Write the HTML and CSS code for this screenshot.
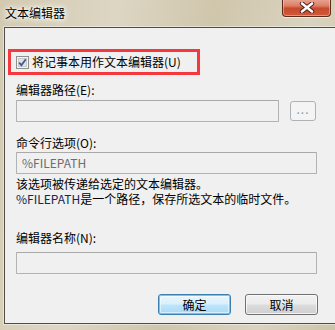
FILE: index.html
```html
<!DOCTYPE html>
<html>
<head>
    <title>文本编辑器</title>
    <link rel="stylesheet" href="styles.css">
</head>
<body>
    <div class="window">
        <div class="titlebar">
            <span class="title">文本编辑器</span>
            <div class="close-btn">
                <svg width="16" height="11" viewBox="0 0 16 11">
                    <path d="M3 1.5 L13 9.5 M13 1.5 L3 9.5" stroke="#4a1a10" stroke-width="4.4" stroke-linecap="round"/>
                    <path d="M3 1.5 L13 9.5 M13 1.5 L3 9.5" stroke="#ffffff" stroke-width="2.6" stroke-linecap="round"/>
                </svg>
            </div>
        </div>

        <div class="client">
            <!-- highlighted option -->
            <div class="highlight">
                <label class="check-row">
                    <span class="checkbox">
                        <svg width="13" height="13" viewBox="0 0 13 13">
                            <rect x="0.5" y="0.5" width="12" height="12" fill="#f4f4f4" stroke="#8e8f8f"/>
                            <rect x="2.5" y="2.5" width="8" height="8" fill="#e2e2e2" stroke="#c9c9c9"/>
                            <path d="M3.2 6.6 L5.4 9.3 L9.8 3.2" fill="none" stroke="#3f5a96" stroke-width="1.8"/>
                        </svg>
                    </span>
                    将记事本用作文本编辑器(U)
                </label>
            </div>

            <p class="label label-path">编辑器路径(E):</p>
            <div class="path-row">
                <div class="field field-path"></div>
                <div class="browse-btn">...</div>
            </div>

            <p class="label label-args">命令行选项(O):</p>
            <div class="field field-wide field-args">%FILEPATH</div>
            <p class="desc">该选项被传递给选定的文本编辑器。<br><span class="var">%FILEPATH</span>是一个路径，保存所选文本的临时文件。</p>

            <p class="label label-name">编辑器名称(N):</p>
            <div class="field field-wide field-name"></div>

            <div class="buttons">
                <div class="btn btn-default">确定</div>
                <div class="btn">取消</div>
            </div>
        </div>
    </div>
</body>
</html>
```

FILE: styles.css
```css
body {
    margin: 0;
    width: 335px;
    height: 330px;
    overflow: hidden;
    font-family: "Noto Sans CJK SC", sans-serif;
    font-size: 12px;
    color: #000;
    background: linear-gradient(100deg, #d2c9b0 0%, #ddd6c3 30%, #cfc6ac 55%, #dad3bf 80%, #cdc4a9 100%);
}

.window { width: 335px; height: 330px; }

.titlebar {
    height: 27px;
    display: flex;
    justify-content: space-between;
    align-items: flex-start;
}
.title {
    margin: 4px 0 0 5px;
    line-height: 17px;
    text-shadow: 0 0 6px #fff, 0 0 8px #fff, 0 0 3px #fff;
}
.close-btn {
    width: 47px;
    height: 17px;
    margin-right: 4px;
    margin-top: -1px;
    border: 1px solid #5e2a1c;
    border-top: none;
    border-radius: 0 0 4px 4px;
    background: linear-gradient(#e9a897 0%, #dc7e66 40%, #c84a2c 55%, #d1593a 100%);
    box-shadow: inset 0 0 0 1px rgba(255, 220, 200, .45), 0 1px 0 rgba(255, 255, 255, .6);
    display: flex;
    align-items: center;
    justify-content: center;
}

.client {
    margin-left: 4px;
    width: 323px;
    height: 295px;
    background: #f0f0f0;
    border: 1px solid #4e4e48;
    box-shadow: 0 0 0 1px rgba(255, 255, 255, .45);
    padding-left: 11px;
    box-sizing: content-box;
}
.client > * { margin: 0; }

.highlight {
    margin: 21px 0 0 -8px !important;
    width: 186px;
    height: 20px;
    border: 3px solid #f5383c;
    display: flex;
    align-items: center;
}
.check-row {
    display: flex;
    align-items: center;
    padding-left: 5px;
    line-height: 16px;
}
.checkbox { width: 13px; height: 13px; margin-right: 3px; display: flex; }

.label { line-height: 16px; }
.label-path { margin-top: 7px !important; }
.label-args { margin-top: 13px !important; }
.label-name { margin-top: 24px !important; }

.field {
    height: 20px;
    border: 1px solid #b3b3b3;
    border-top-color: #a9a9a9;
    border-radius: 1px;
    background: #f0f0f0;
    color: #6d6d6d;
    padding-left: 5px;
    line-height: 20px;
}
.path-row {
    margin-top: 2px !important;
    display: flex;
    align-items: center;
}
.field-path { width: 256px; }
.browse-btn {
    margin-left: 11px;
    width: 24px;
    height: 18px;
    border: 1px solid #adb2b5;
    border-radius: 3px;
    background: #f4f4f4;
    color: #8d9aa8;
    text-align: center;
    line-height: 14px;
    letter-spacing: 1px;
}
.field-wide { width: 294px; }
.field-args { margin-top: 1px !important; }
.field-name { margin-top: 6px !important; }

.desc { margin-top: 2px !important; line-height: 15px; }
.var { color: #15294f; }

.buttons {
    margin-top: 20px !important;
    display: flex;
    justify-content: flex-end;
    gap: 14px;
    padding-right: 21px;
}
.btn {
    width: 71px;
    height: 19px;
    border: 1px solid #707070;
    border-radius: 3px;
    background: linear-gradient(#f2f2f2 0%, #ebebeb 48%, #dddddd 52%, #cfcfcf 100%);
    box-shadow: inset 0 0 0 1px rgba(255, 255, 255, .7);
    text-align: center;
    line-height: 19px;
}
.btn-default {
    border-color: #3c7fb1;
    background: linear-gradient(#eaf6fd 0%, #d9f0fc 48%, #bee6fd 52%, #a7d9f5 100%);
    box-shadow: inset 0 0 0 1px #48d8fb, inset 0 0 0 2px rgba(255, 255, 255, .5);
}
```
